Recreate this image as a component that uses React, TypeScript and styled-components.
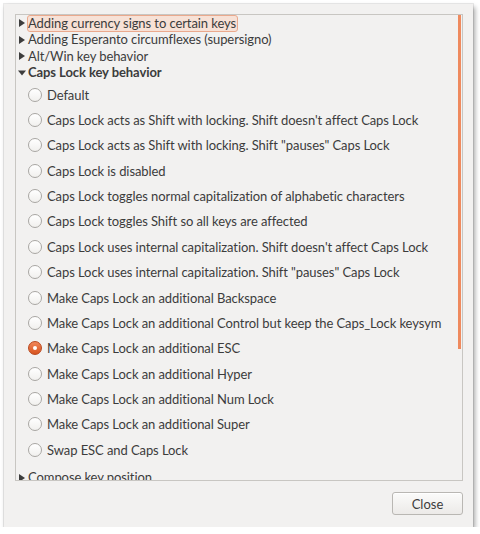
import React from "react";
import styled, { createGlobalStyle } from "styled-components";

const GlobalStyle = createGlobalStyle`
  body {
    margin: 0;
    background: #ffffff;
    font-family: "Lato", "Open Sans", sans-serif;
  }
`;

const capsOptions = [
  "Default",
  "Caps Lock acts as Shift with locking. Shift doesn't affect Caps Lock",
  'Caps Lock acts as Shift with locking. Shift "pauses" Caps Lock',
  "Caps Lock is disabled",
  "Caps Lock toggles normal capitalization of alphabetic characters",
  "Caps Lock toggles Shift so all keys are affected",
  "Caps Lock uses internal capitalization. Shift doesn't affect Caps Lock",
  'Caps Lock uses internal capitalization. Shift "pauses" Caps Lock',
  "Make Caps Lock an additional Backspace",
  "Make Caps Lock an additional Control but keep the Caps_Lock keysym",
  "Make Caps Lock an additional ESC",
  "Make Caps Lock an additional Hyper",
  "Make Caps Lock an additional Num Lock",
  "Make Caps Lock an additional Super",
  "Swap ESC and Caps Lock",
];

const Expander = ({ open }: { open?: boolean }) =>
  open ? (
    <svg width="8" height="8" viewBox="0 0 8 8">
      <path d="M0 1.5 L8 1.5 L4 6.5 Z" fill="#3c3c3c" />
    </svg>
  ) : (
    <svg width="8" height="8" viewBox="0 0 8 8">
      <path d="M1 0 L7 4 L1 8 Z" fill="#3c3c3c" />
    </svg>
  );

const App = () => {
  return (
    <>
      <GlobalStyle />
      <Dialog>
        <Frame>
          <TreeRow>
            <Expander />
            <Label focused>Adding currency signs to certain keys</Label>
          </TreeRow>
          <TreeRow>
            <Expander />
            <Label>Adding Esperanto circumflexes (supersigno)</Label>
          </TreeRow>
          <TreeRow>
            <Expander />
            <Label>Alt/Win key behavior</Label>
          </TreeRow>
          <TreeRow>
            <Expander open />
            <Label bold>Caps Lock key behavior</Label>
          </TreeRow>
          <RadioList>
            {capsOptions.map((text) => (
              <RadioRow key={text}>
                <Radio checked={text === "Make Caps Lock an additional ESC"} />
                <RadioText>{text}</RadioText>
              </RadioRow>
            ))}
          </RadioList>
          <TreeRow>
            <Expander />
            <Label>Compose key position</Label>
          </TreeRow>
          <ScrollIndicator />
        </Frame>
        <ButtonBar>
          <Button>Close</Button>
        </ButtonBar>
      </Dialog>
    </>
  );
};

export default App;

const Dialog = styled.div`
  margin: 4px 0 0 4px;
  width: 469px;
  height: 523px;
  box-sizing: border-box;
  padding: 10px 10px 12px 11px;
  background: #f2f1f0;
  display: flex;
  flex-direction: column;
  gap: 11px;
  box-shadow: 0 0 0 1px rgba(0, 0, 0, 0.08), 2px 3px 5px rgba(0, 0, 0, 0.35);
`;

const Frame = styled.div`
  position: relative;
  height: 467px;
  box-sizing: border-box;
  border: 1px solid #c8c6c2;
  overflow: hidden;
  color: #3c3c3c;
  font-size: 13px;
  letter-spacing: -0.08px;
`;

/* overlay scrollbar thumb */
const ScrollIndicator = styled.div`
  position: absolute;
  right: 1px;
  top: 0;
  width: 3px;
  height: 334px;
  background: #ef8a5e;
`;

const TreeRow = styled.div`
  height: 16.5px;
  display: flex;
  align-items: center;
  padding-left: 2px;
  gap: 1px;
`;

const Label = styled.span<{ focused?: boolean; bold?: boolean }>`
  line-height: 15px;
  padding: 0 1px 0 0;
  border-radius: 3px;
  white-space: nowrap;
  font-weight: ${(p) => (p.bold ? 700 : 400)};
  border: 1px solid ${(p) => (p.focused ? "#eaa98d" : "transparent")};
  background: ${(p) => (p.focused ? "#f7e1d6" : "transparent")};
`;

const RadioList = styled.div`
  padding: 1px 0 7px;
`;

const RadioRow = styled.div`
  height: 25.36px;
  display: flex;
  align-items: center;
  padding-left: 12px;
  gap: 5px;
`;

const Radio = styled.span<{ checked?: boolean }>`
  position: relative;
  width: 14px;
  height: 14px;
  box-sizing: border-box;
  border-radius: 50%;
  flex-shrink: 0;
  border: 1px solid ${(p) => (p.checked ? "#b9481e" : "#a9a7a3")};
  background: ${(p) =>
    p.checked
      ? "linear-gradient(#f0875a, #d8541f)"
      : "linear-gradient(#ffffff, #f1f0ee)"};

  &::after {
    content: "";
    display: ${(p) => (p.checked ? "block" : "none")};
    position: absolute;
    left: 4px;
    top: 4px;
    width: 4px;
    height: 4px;
    border-radius: 50%;
    background: #ffffff;
  }
`;

const RadioText = styled.span`
  white-space: nowrap;
`;

const ButtonBar = styled.div`
  display: flex;
  justify-content: flex-end;
`;

const Button = styled.button`
  width: 71px;
  height: 23px;
  border: 1px solid #b9b7b3;
  border-radius: 3px;
  background: linear-gradient(#fbfbfa, #eceae8);
  color: #3c3c3c;
  font-family: "Lato", "Open Sans", sans-serif;
  font-size: 13px;
  padding: 0;
  box-shadow: inset 0 1px 0 #ffffff;
`;
